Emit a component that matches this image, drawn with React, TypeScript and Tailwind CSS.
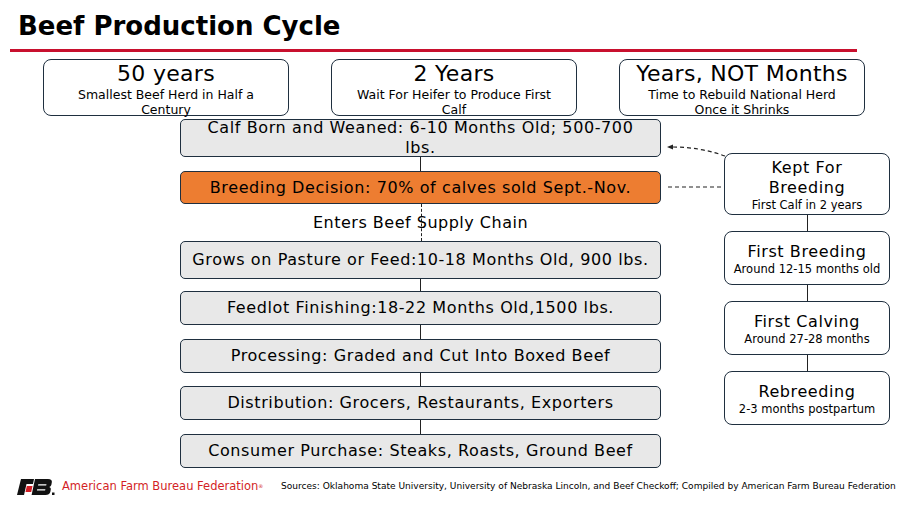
import React from "react"

const font = { fontFamily: '"DejaVu Sans", Verdana, sans-serif' }

function TopBox({ title, sub }: { title: string; sub: string }) {
  return (
    <div className="w-[246px] h-[57px] rounded-[8px] border-[1.5px] border-[#1f2f3f] bg-white px-[18px] flex flex-col items-center text-center text-black">
      <div className="text-[22px] leading-[26px] tracking-[0.3px] pt-[1px] whitespace-nowrap">{title}</div>
      <div className="text-[12.5px] leading-[15px]">{sub}</div>
    </div>
  )
}

function Connector({ h }: { h: string }) {
  return <div className={`w-px bg-[#222] mx-auto ${h}`} />
}

function StepBox({ text, h, orange, pad = "px-2" }: { text: string; h: string; orange?: boolean; pad?: string }) {
  return (
    <div
      className={`${h} ${pad} rounded-[5px] border-[1.5px] border-[#1f2f3f] flex items-center justify-center text-center text-[16px] leading-[20px] tracking-[0.6px] text-black ${
        orange ? "bg-[#ed7d31]" : "bg-[#e8e8e8]"
      }`}
    >
      {text}
    </div>
  )
}

function SideBox({ title, sub, h }: { title: React.ReactNode; sub: string; h: string }) {
  return (
    <div className={`${h} rounded-[8px] border-[1.5px] border-[#1f2f3f] bg-white flex flex-col items-center justify-center text-center text-black pt-[2px]`}>
      <div className="text-[16px] leading-[20px] tracking-[0.6px]">{title}</div>
      <div className="text-[11.5px] leading-[15px]">{sub}</div>
    </div>
  )
}

export default function App() {
  const steps = [
    { text: "Grows on Pasture or Feed:10-18 Months Old, 900 lbs.", h: "h-[38px]", gap: "" },
    { text: "Feedlot Finishing:18-22 Months Old,1500 lbs.", h: "h-[34px]", gap: "h-[12px]" },
    { text: "Processing: Graded and Cut Into Boxed Beef", h: "h-[34px]", gap: "h-[14px]" },
    { text: "Distribution: Grocers, Restaurants, Exporters", h: "h-[34px]", gap: "h-[13px]" },
    { text: "Consumer Purchase: Steaks, Roasts, Ground Beef", h: "h-[34px]", gap: "h-[14px]" },
  ]

  const side = [
    { title: "First Breeding", sub: "Around 12-15 months old" },
    { title: "First Calving", sub: "Around 27-28 months" },
    { title: "Rebreeding", sub: "2-3 months postpartum" },
  ]

  return (
    <div className="relative w-[900px] h-[506px] overflow-hidden bg-white" style={font}>
      {/* Header */}
      <h1 className="pl-[18px] pt-[11px] text-[26px] leading-[30px] font-bold text-black">Beef Production Cycle</h1>
      <div className="ml-[10px] mt-[8px] w-[847px] h-[3px] bg-[#c8102e]" />

      {/* Key facts */}
      <div className="flex pl-[43px] gap-[42px] mt-[7px]">
        <TopBox title="50 years" sub="Smallest Beef Herd in Half a Century" />
        <TopBox title="2 Years" sub="Wait For Heifer to Produce First Calf" />
        <TopBox title="Years, NOT Months" sub="Time to Rebuild National Herd Once it Shrinks" />
      </div>

      {/* Flow */}
      <div className="flex pl-[180px] gap-[63px] mt-[3px]">
        <div className="w-[481px] flex flex-col">
          <StepBox text="Calf Born and Weaned: 6-10 Months Old; 500-700 lbs." h="h-[38px]" pad="px-[20px]" />
          <Connector h="h-[14px]" />
          <StepBox text="Breeding Decision: 70% of calves sold Sept.-Nov." h="h-[33px]" orange />
          <div className="relative h-[37px] flex items-center justify-center">
            <div className="absolute left-1/2 top-0 bottom-0 border-l border-dashed border-[#222]" />
            <span className="relative text-[16px] leading-[20px] tracking-[0.5px] text-black">Enters Beef Supply Chain</span>
          </div>
          {steps.map((s, i) => (
            <React.Fragment key={i}>
              {s.gap && <Connector h={s.gap} />}
              <StepBox text={s.text} h={s.h} />
            </React.Fragment>
          ))}
        </div>

        <div className="w-[166px] flex flex-col mt-[34px]">
          <SideBox title={<>Kept For<br />Breeding</>} sub="First Calf in 2 years" h="h-[62px]" />
          {side.map((s) => (
            <React.Fragment key={s.title}>
              <Connector h="h-[16px]" />
              <SideBox title={s.title} sub={s.sub} h="h-[54px]" />
            </React.Fragment>
          ))}
        </div>
      </div>

      {/* Dashed links from the breeding branch */}
      <svg className="absolute inset-0 pointer-events-none" width="900" height="506">
        <path d="M725 156 Q700 147 672 147" fill="none" stroke="#222" strokeWidth="1.2" strokeDasharray="4 3" />
        <path d="M667 147 L673 144.5 L673 149.5 Z" fill="#222" />
        <path d="M668 187 L724 187" fill="none" stroke="#222" strokeWidth="1.2" strokeDasharray="4 3" />
      </svg>

      {/* Footer */}
      <div className="absolute left-0 right-0 top-[478px] h-[18px] flex items-center pl-[17px] whitespace-nowrap">
        <svg width="38" height="16" viewBox="0 0 38 16">
          <polygon points="4,0 17,0 16,5 9.5,5 7,16 0,16" fill="#111" />
          <polygon points="9.8,7 15.5,7 14.2,13 8.5,13" fill="#d31f26" />
          <path
            fillRule="evenodd"
            d="M18 0 H31 Q35.5 0 34.8 3.5 L34.3 6 Q33.8 7.5 32.3 8 Q34.3 8.6 33.8 10.6 L33.3 13 Q32.5 16 28.5 16 H14.6 Z M21.3 5.2 H29.5 L29.2 6.6 H21 Z M20.2 10.2 H28.4 L28.1 11.6 H19.9 Z"
            fill="#111"
          />
          <rect x="35" y="13.5" width="2.5" height="2.5" fill="#111" />
        </svg>
        <span className="ml-[7px] text-[11.5px] text-[#d31f26] leading-none">
          American Farm Bureau Federation<sup className="text-[5px]">®</sup>
        </span>
        <span className="absolute left-[281px] text-[9.05px] text-black leading-none">
          Sources: Oklahoma State University, University of Nebraska Lincoln, and Beef Checkoff; Compiled by American Farm Bureau Federation
        </span>
      </div>
    </div>
  )
}
